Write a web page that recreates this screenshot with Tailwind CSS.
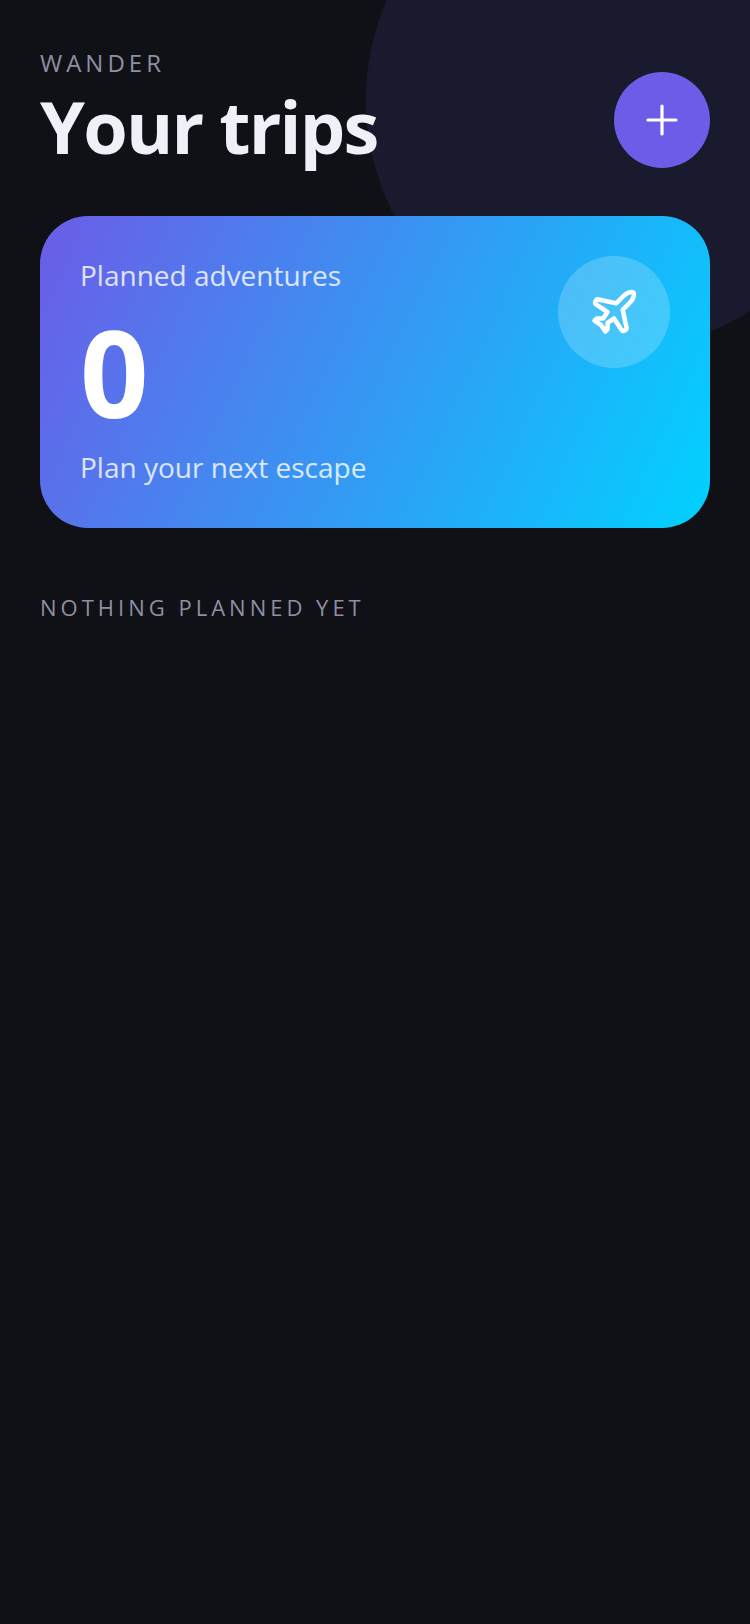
<!DOCTYPE html>
<html lang="en">
<head>
  <meta charset="UTF-8" />
  <meta name="viewport" content="width=device-width, initial-scale=1.0" />
  <title>Wander</title>
  <script src="https://cdn.jsdelivr.net/npm/@tailwindcss/browser@4"></script>
</head>
<body class="bg-[#0f1117] font-['Open_Sans',sans-serif]">
  <div class="relative w-[750px] h-[1624px] overflow-hidden px-10 pt-[46px]">
    <!-- background blob -->
    <div class="absolute left-[366px] top-[-150px] w-[500px] h-[500px] rounded-full bg-[#1a1a2e]"></div>

    <div class="relative flex items-start justify-between h-[170px]">
      <div>
        <p class="text-[24px] leading-[34px] tracking-[4px] text-[#8f8fa0]">WANDER</p>
        <h1 class="mt-[2px] text-[72px] leading-[88px] font-bold tracking-[-1.8px] text-[#f0f0f8]">Your trips</h1>
      </div>
      <button class="mt-[26px] w-24 h-24 rounded-full bg-[#6c5ce7] flex items-center justify-center">
        <svg width="32" height="32" viewBox="0 0 32 32" fill="none" stroke="#fff" stroke-width="3.2" stroke-linecap="round">
          <path d="M16 2v28M2 16h28" />
        </svg>
      </button>
    </div>

    <div class="relative h-[312px] rounded-[48px] p-10 flex justify-between bg-[linear-gradient(115deg,#6c5ce7,#00d2ff)]">
      <div>
        <p class="text-[28px] leading-[38px] text-white/80">Planned adventures</p>
        <p class="text-[120px] leading-[130px] mt-[13px] font-bold text-white">0</p>
        <p class="text-[28px] leading-[38px] mt-[11px] text-white/80">Plan your next escape</p>
      </div>
      <div class="w-28 h-28 rounded-full bg-white/20 flex items-center justify-center">
        <svg width="52" height="52" viewBox="0 0 24 24" fill="none" stroke="#fff" stroke-width="2.1" stroke-linecap="round" stroke-linejoin="round">
          <path d="M17.8 19.2 16 11l3.5-3.5C21 6 21.5 4 21 3c-1-.5-3 0-4.5 1.5L13 8 4.8 6.2c-.5-.1-.9.1-1.1.5l-.3.5c-.2.5-.1 1 .3 1.3L9 12l-2 3H4l-1 1 3 2 2 3 1-1v-3l3-2 3.5 5.3c.3.4.8.5 1.3.3l.5-.2c.4-.3.6-.7.5-1.2z" />
        </svg>
      </div>
    </div>

    <p class="relative mt-[64px] text-[22px] leading-[30px] tracking-[4px] text-[#8f8fa0]">NOTHING PLANNED YET</p>
  </div>
</body>
</html>
